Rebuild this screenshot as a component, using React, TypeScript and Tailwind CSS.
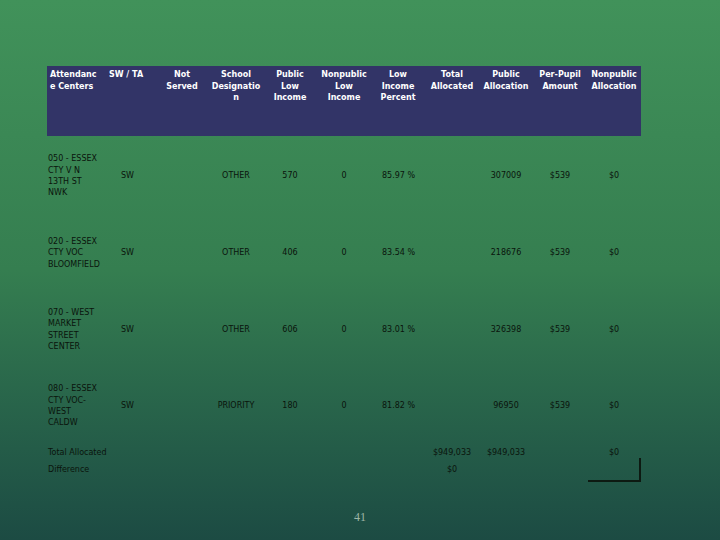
import React from 'react';

const cols = 'grid grid-cols-[58px_50px_54px_54px_54px_54px_54px_54px_54px_54px_54px]';

const headers: React.ReactNode[] = [
  <>Attendanc<br />e Centers</>,
  <>SW / TA</>,
  <>Not<br />Served</>,
  <>School<br />Designatio<br />n</>,
  <>Public<br />Low<br />Income</>,
  <>Nonpublic<br />Low<br />Income</>,
  <>Low<br />Income<br />Percent</>,
  <>Total<br />Allocated</>,
  <>Public<br />Allocation</>,
  <>Per-Pupil<br />Amount</>,
  <>Nonpublic<br />Allocation</>,
];

const rows = [
  { name: ['050 - ESSEX', 'CTY V N', '13TH ST', 'NWK'], desig: 'OTHER', low: '570', pct: '85.97 %', alloc: '307009', h: 'h-[78px]' },
  { name: ['020 - ESSEX', 'CTY VOC', 'BLOOMFIELD'], desig: 'OTHER', low: '406', pct: '83.54 %', alloc: '218676', h: 'h-[76px]' },
  { name: ['070 - WEST', 'MARKET', 'STREET', 'CENTER'], desig: 'OTHER', low: '606', pct: '83.01 %', alloc: '326398', h: 'h-[77px]' },
  { name: ['080 - ESSEX', 'CTY VOC-', 'WEST', 'CALDW'], desig: 'PRIORITY', low: '180', pct: '81.82 %', alloc: '96950', h: 'h-[76px]' },
];

export default function App() {
  return (
    <div className="h-[540px] w-[720px] overflow-hidden bg-gradient-to-b from-[#41925a] via-[#357e50] to-[#1c4b43] font-['DejaVu_Sans',sans-serif]">
      <div className="ml-[47px] pt-[66px] w-[594px]">
        {/* Header band */}
        <div className={`${cols} h-[70px] bg-[#323467] pt-[3px] text-[8px] font-bold leading-[11.5px] text-white`}>
          {headers.map((h, i) => (
            <div
              key={i}
              className={i === 0 ? 'pl-[3px] text-left' : i === 1 ? 'pl-[4px] text-left' : 'text-center'}
            >
              {h}
            </div>
          ))}
        </div>

        {/* Data rows */}
        <div className="mt-[1px] text-[8px] leading-[11.3px] text-[#0a140c]">
          {rows.map((r, i) => (
            <div key={i} className={`${cols} ${r.h} items-center`}>
              <div className="pl-[1px]">
                {r.name.map((l) => (
                  <div key={l}>{l}</div>
                ))}
              </div>
              <div className="pl-[16px]">SW</div>
              <div />
              <div className="text-center">{r.desig}</div>
              <div className="text-center">{r.low}</div>
              <div className="text-center">0</div>
              <div className="pl-[11px]">{r.pct}</div>
              <div />
              <div className="text-center">{r.alloc}</div>
              <div className="text-center">$539</div>
              <div className="text-center">$0</div>
            </div>
          ))}

          {/* Totals */}
          <div className={`${cols} h-[17px] items-center`}>
            <div className="col-span-7 pl-[1px]">Total Allocated</div>
            <div className="text-center">$949,033</div>
            <div className="text-center">$949,033</div>
            <div />
            <div className="text-center">$0</div>
          </div>
          <div className={`${cols} h-[17px] items-center`}>
            <div className="col-span-7 pl-[1px]">Difference</div>
            <div className="text-center">$0</div>
            <div />
            <div />
            <div className="h-[17px] self-start">
              <div className="-mt-[3px] ml-[1px] h-[24px] border-r-2 border-b-2 border-[#0d1a12]" />
            </div>
          </div>
        </div>
      </div>

      <div className="mt-[30px] text-center font-['Liberation_Serif',serif] text-[12px] text-[#9db5a6]">41</div>
    </div>
  );
}
